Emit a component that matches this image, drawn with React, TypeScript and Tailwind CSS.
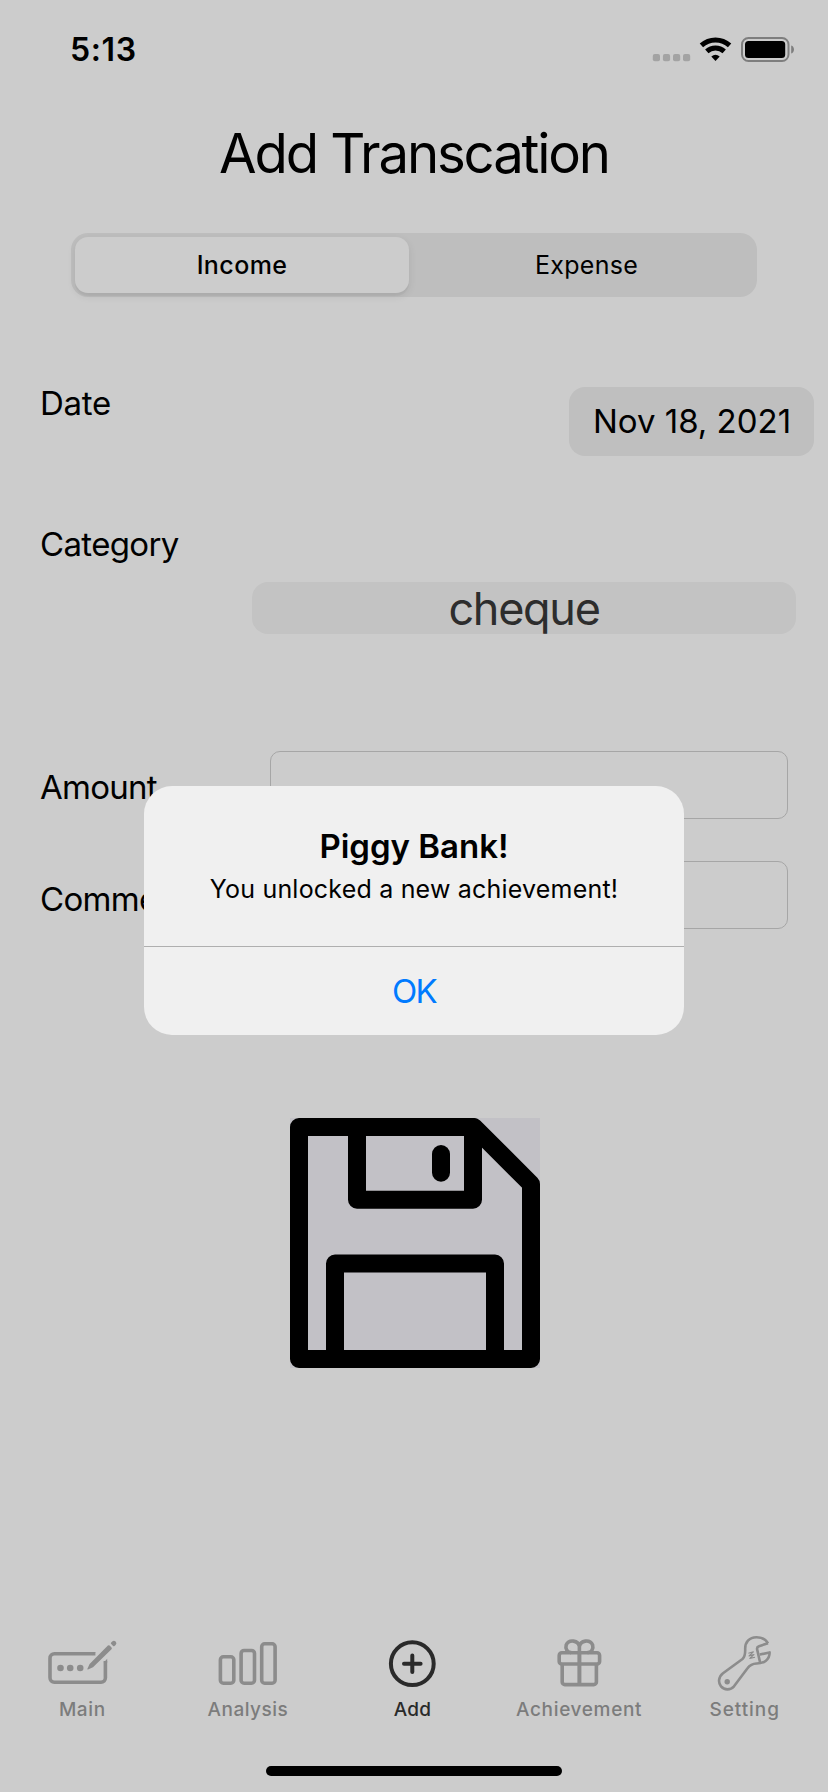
import type { ReactNode } from "react";

function StatusIcons() {
  return (
    <svg width="142" height="25" viewBox="0 0 142 25" fill="none" aria-hidden="true">
      {[0.8, 10.9, 21, 31].map((x) => (
        <rect key={x} x={x} y="17" width="7.2" height="7.2" rx="2" fill="#a3a3a3" />
      ))}
      <path d="M49.4 8.4a21 21 0 0 1 28.2 0" stroke="#000" strokeWidth="5" />
      <path d="M54.8 14.3a13 13 0 0 1 17.4 0" stroke="#000" strokeWidth="5" />
      <path d="M59.3 19.6a6.6 6.6 0 0 1 8.4 0L63.5 24z" fill="#000" />
      <rect x="90" y="1" width="46.5" height="23" rx="6.5" stroke="#7e7e7e" strokeWidth="2" />
      <rect x="93" y="4" width="40.2" height="17" rx="3.5" fill="#000" />
      <path d="M139.2 8.6c3.7 1 3.7 7 0 8z" fill="#7e7e7e" />
    </svg>
  );
}

function SaveIcon() {
  return (
    <svg width="250" height="250" viewBox="0 0 250 250" fill="none" stroke="#000" strokeWidth="18" strokeLinejoin="round" strokeLinecap="round" aria-hidden="true">
      <path d="M9 9H184L241 66V241H9z" />
      <path d="M67 9V81.7H183V9" />
      <path d="M151 36V54.7" />
      <path d="M45 241V145.5H205V241" />
    </svg>
  );
}

function TabIcon({ children }: { children: ReactNode }) {
  return (
    <svg width="76" height="62" viewBox="0 0 76 62" fill="none" stroke="currentColor" strokeWidth="3.6" aria-hidden="true">
      {children}
    </svg>
  );
}

const tabs: { label: string; active?: boolean; spacing: string; icon: ReactNode }[] = [
  {
    label: "Main",
    spacing: "tracking-[0.6px]",
    icon: (
      <>
        <path d="M50.4 21.8H9.4a4.4 4.4 0 0 0-4.4 4.4v19.6a4.4 4.4 0 0 0 4.4 4.4H56a4.4 4.4 0 0 0 4.4-4.4V29" />
        <path d="M49 20h1.6l-3.4 3.6zM58.6 30.8l3.6-4v4z" fill="currentColor" stroke="none" />
        <g fill="currentColor" stroke="none">
          <circle cx="15.5" cy="36" r="3.3" />
          <circle cx="25.2" cy="36" r="3.3" />
          <circle cx="35.2" cy="36" r="3.3" />
          <path d="M42.2 37.3L44.6 31.9L62.9 13.6a1.2 1.2 0 0 1 1.7 0l1.9 1.9a1.2 1.2 0 0 1 0 1.7L48 35.2L43 37.6z" />
          <path d="M66.2 10.6l1-1.1a2.4 2.4 0 0 1 3.4 3.4l-1.1 1.1a1 1 0 0 1-1.4 0l-1.9-1.9a1 1 0 0 1 0-1.5z" />
        </g>
      </>
    ),
  },
  {
    label: "Analysis",
    spacing: "tracking-[0.5px]",
    icon: (
      <>
        <rect x="10.4" y="24.8" width="13.4" height="26.4" rx="3" />
        <rect x="31.1" y="18.5" width="13.4" height="32.7" rx="3" />
        <rect x="51.7" y="11.8" width="13.4" height="39.4" rx="3" />
      </>
    ),
  },
  {
    label: "Add",
    active: true,
    spacing: "tracking-[0.3px]",
    icon: (
      <g strokeWidth="4" strokeLinecap="round">
        <circle cx="36.3" cy="31.7" r="21.4" />
        <path d="M36.3 23.4V40M28 31.7H44.6" />
      </g>
    ),
  },
  {
    label: "Achievement",
    spacing: "tracking-[0.65px]",
    icon: (
      <>
        <rect x="17.2" y="20.8" width="40.4" height="11.2" rx="2.6" />
        <path d="M20.2 32V50a2.6 2.6 0 0 0 2.6 2.6H51.8a2.6 2.6 0 0 0 2.6-2.6V32" />
        <path d="M37.4 20V53" strokeWidth="4" />
        <path d="M37.4 20.5V14.6a6.9 6.4 0 0 0-13.2-1.6c-1.2 4 1.2 7.2 5 7.6M37.4 20.5V14.6a6.9 6.4 0 0 1 13.2-1.6c1.2 4-1.2 7.2-5 7.6" />
      </>
    ),
  },
  {
    label: "Setting",
    spacing: "tracking-[0.95px]",
    icon: (
      <g strokeWidth="2.6" strokeLinejoin="round">
        <path d="M61 11.3C58.6 7 53.5 5.2 49.5 5.2C42 5.2 38 10.5 38.2 17C38.3 21 38.4 24.4 35.5 27L16 41.3C11.5 44.9 10.9 50.5 14 54.4C17.4 58.5 23.6 58.3 27 54.3L40.5 36.3C43 32.8 46 31.6 49.5 31.5C57 31.6 62.8 27.5 62.6 20.4L52.8 22.6" />
        <path d="M61 11.3L52 14.2C50.2 14.8 49.8 16 50.2 17.6L53.2 31" />
        <circle cx="20.2" cy="49.7" r="2.7" fill="currentColor" stroke="none" />
        <path d="M41.4 21.2L46.4 19.8L42 23.9L47 22.6L42.8 26.4L48 25.2" strokeWidth="1.1" />
      </g>
    ),
  },
];

function Field() {
  return <input className="h-[68px] w-[518px] rounded-[10px] border border-[#a6a6a6] bg-transparent px-3" />;
}

const labelText = "text-[33px] leading-8";

export default function App() {
  return (
    <main className="relative flex h-[1792px] w-[828px] flex-col overflow-hidden bg-[#cccccc] font-['Inter','Liberation_Sans',sans-serif] text-black">
      <header className="flex h-[99px] shrink-0 items-center justify-between pr-[34px] pl-[70px]">
        <span className="text-[32px] leading-none font-semibold tracking-[0.6px]">5:13</span>
        <StatusIcons />
      </header>

      <h1 className="h-[108px] shrink-0 text-center text-[54.5px] leading-[109px] tracking-[-2.15px]">Add Transcation</h1>

      <div className="mx-[71px] mt-[26px] flex h-16 shrink-0 rounded-[17px] bg-[#bebebe] p-1">
        <button className="w-[334px] rounded-[13px] bg-[#cccccc] text-[25px] leading-none font-medium tracking-[0.4px] shadow-[0_3px_8px_rgba(0,0,0,0.09),0_3px_1px_rgba(0,0,0,0.03)]">
          Income
        </button>
        <button className="flex-1 pl-[11px] text-[25px] leading-none tracking-[0.3px]">Expense</button>
      </div>

      <div className="mt-[90px] flex h-[69px] shrink-0 items-start justify-between pr-[14px] pl-10">
        <span className={`${labelText} tracking-[-0.3px]`}>Date</span>
        <button className="h-[69px] w-[245px] rounded-[16px] bg-[#bfbfbf] pl-px text-[33px] leading-none">Nov 18, 2021</button>
      </div>

      <div className="mt-[72px] flex shrink-0 flex-col pr-8 pl-10">
        <span className={`${labelText} tracking-[-0.65px]`}>Category</span>
        <div className="mt-[22px] h-[52px] w-[544px] self-end rounded-[16px] bg-[#c3c3c3] text-center text-[45px] leading-[53px] tracking-[-1.3px] text-[#2d2d2d]">
          cheque
        </div>
      </div>

      <div className="mt-[117px] flex shrink-0 justify-between pr-10 pl-10">
        <span className={`${labelText} mt-[20px] tracking-[-0.75px]`}>Amount</span>
        <Field />
      </div>
      <div className="mt-[42px] flex shrink-0 justify-between pr-10 pl-10">
        <span className={`${labelText} mt-[22px] tracking-[-0.7px]`}>Comment</span>
        <Field />
      </div>

      <button className="mt-[189px] ml-[290px] size-[250px] shrink-0 bg-[#c2c1c6]">
        <SaveIcon />
      </button>

      <nav className="mt-[264px] grid shrink-0 grid-cols-5">
        {tabs.map((tab) => (
          <div key={tab.label} className={`flex flex-col items-center ${tab.active ? "text-[#2a2a2a]" : "text-[#8c8c8c]"}`}>
            <TabIcon>{tab.icon}</TabIcon>
            <span className={`mt-[5px] text-[19px] leading-[22px] font-medium ${tab.spacing} ${tab.active ? "-ml-[3px]" : "-ml-px text-[#7c7c7c]"}`}>
              {tab.label}
            </span>
          </div>
        ))}
      </nav>

      <div className="mt-auto mb-4 h-[10px] w-[296px] shrink-0 self-center rounded-full bg-black" />

      <section role="alertdialog" className="absolute top-[786px] left-[144px] flex h-[249px] w-[540px] flex-col rounded-[28px] bg-[#f0f0f0] text-center">
        <div className="h-[160px] pt-[39px]">
          <h2 className="text-[33px] leading-[42px] font-semibold">Piggy Bank!</h2>
          <p className="text-[25px] leading-[44px] tracking-[0.2px]">You unlocked a new achievement!</p>
        </div>
        <button className="flex-1 border-t border-[#afafaf] text-[33px] leading-none tracking-[-1.6px] text-[#007aff]">OK</button>
      </section>
    </main>
  );
}
